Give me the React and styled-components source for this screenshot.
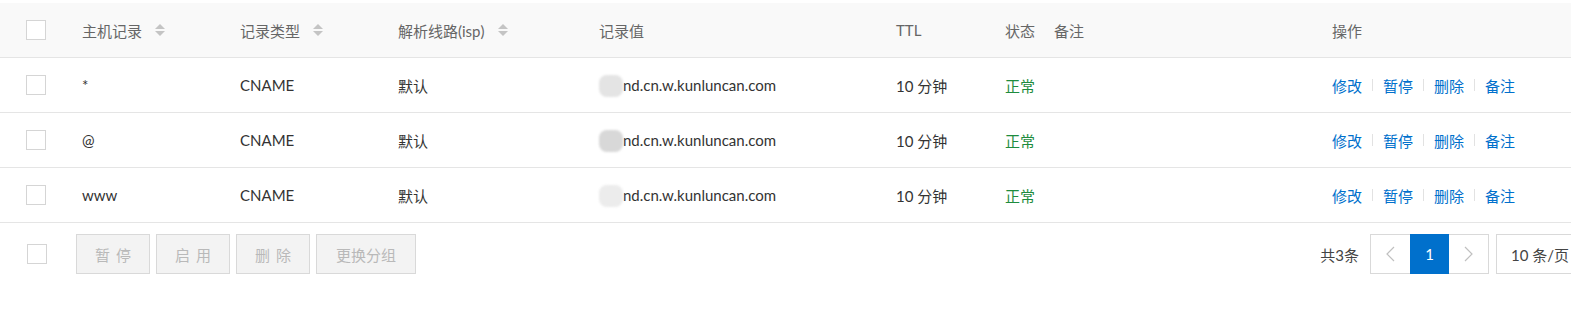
import React from 'react';
import styled, { createGlobalStyle } from 'styled-components';

const GlobalStyle = createGlobalStyle`
  html, body {
    margin: 0;
    padding: 0;
    background: #fff;
    font-family: Lato, "Noto Sans CJK SC", sans-serif;
    font-size: 15px;
    color: #333;
  }
`;

const cols = '82px 158px 158px 201px 297px 109px 49px 278px 1fr';

const Page = styled.div`
  padding-top: 3px;
  width: 1571px;
  overflow: hidden;
`;

const Row = styled.div`
  display: grid;
  grid-template-columns: ${cols};
  align-items: center;
  height: 54px;
  background: ${(p) => (p.head ? '#f9f9f9' : '#fff')};
  border-bottom: 1px solid #e5e5e5;
  color: ${(p) => (p.head ? '#666' : '#333')};
`;

const Cell = styled.div`
  display: flex;
  align-items: center;
  gap: 13px;
  white-space: nowrap;
  color: ${(p) => p.color || 'inherit'};
`;

const CheckCell = styled.div`
  padding-left: ${(p) => p.pad || 26}px;
  display: flex;
  align-items: center;
`;

const Check = styled.span`
  display: block;
  width: 18px;
  height: 18px;
  border: 1px solid #d5d5d5;
  background: #fff;
`;

const Sorter = styled.span`
  display: inline-flex;
  flex-direction: column;
  gap: 2px;
  &::before,
  &::after {
    content: '';
    display: block;
    width: 0;
    height: 0;
    border-left: 5px solid transparent;
    border-right: 5px solid transparent;
  }
  &::before {
    border-bottom: 5px solid #c4c4c4;
  }
  &::after {
    border-top: 5px solid #c4c4c4;
  }
`;

const Masked = styled.span`
  position: relative;
  padding-left: 24px;
`;

const Blob = styled.span`
  position: absolute;
  left: 0;
  top: -1px;
  width: 24px;
  height: 22px;
  border-radius: 8px;
  background: ${(p) => p.tone};
  filter: blur(1.2px);
`;

const Actions = styled.div`
  display: flex;
  align-items: center;
`;

const Link = styled.a`
  color: #0070cc;
  text-decoration: none;
  cursor: pointer;
`;

const Sep = styled.span`
  display: inline-block;
  width: 1px;
  height: 12px;
  background: #e2e2e2;
  margin: 0 10px;
`;

const Footer = styled.div`
  display: flex;
  align-items: center;
  padding-top: 11px;
`;

const BatchButtons = styled.div`
  display: flex;
  gap: 6px;
  margin-left: 29px;
`;

const BatchButton = styled.button`
  height: 40px;
  padding: 0;
  width: ${(p) => p.w}px;
  border: 1px solid #d9d9d9;
  background: #f3f3f3;
  color: #b9b9b9;
  font-family: inherit;
  font-size: 15px;
  letter-spacing: ${(p) => (p.spaced ? '6px' : '0')};
  text-indent: ${(p) => (p.spaced ? '6px' : '0')};
`;

const Pagination = styled.div`
  margin-left: auto;
  display: flex;
  align-items: center;
  margin-right: -12px;
`;

const Total = styled.span`
  color: #444;
  margin-right: 11px;
`;

const Pager = styled.div`
  display: flex;
  border: 1px solid #d9d9d9;
  height: 38px;
`;

const PageBtn = styled.span`
  width: 39px;
  display: flex;
  align-items: center;
  justify-content: center;
  background: ${(p) => (p.active ? '#0070cc' : '#fff')};
  color: ${(p) => (p.active ? '#fff' : '#bbb')};
  margin: ${(p) => (p.active ? '-1px 0' : '0')};
  height: ${(p) => (p.active ? '40px' : '38px')};
`;

const SizeSelect = styled.div`
  box-sizing: border-box;
  margin-left: 7px;
  height: 40px;
  width: 87px;
  border: 1px solid #d9d9d9;
  display: flex;
  align-items: center;
  padding-left: 14px;
  gap: 4px;
  color: #444;
  white-space: nowrap;
`;

const Caret = styled.span`
  width: 0;
  height: 0;
  border-left: 4px solid transparent;
  border-right: 4px solid transparent;
  border-top: 4px solid #999;
`;

const records = [
  { host: '*', tone: '#e4e4e4' },
  { host: '@', tone: '#d8d8d8' },
  { host: 'www', tone: '#ececec' },
];

const Chevron = ({ dir }) => (
  <svg width="9" height="16" viewBox="0 0 9 16">
    <path
      d={dir === 'left' ? 'M8 1 L1 8 L8 15' : 'M1 1 L8 8 L1 15'}
      fill="none"
      stroke="#c0c0c0"
      strokeWidth="1.2"
    />
  </svg>
);

export default function App() {
  return (
    <Page>
      <GlobalStyle />
      <Row head>
        <CheckCell>
          <Check />
        </CheckCell>
        <Cell>
          主机记录 <Sorter />
        </Cell>
        <Cell>
          记录类型 <Sorter />
        </Cell>
        <Cell>
          解析线路(isp) <Sorter />
        </Cell>
        <Cell>记录值</Cell>
        <Cell>TTL</Cell>
        <Cell>状态</Cell>
        <Cell>备注</Cell>
        <Cell>操作</Cell>
      </Row>
      {records.map((r) => (
        <Row key={r.host}>
          <CheckCell>
            <Check />
          </CheckCell>
          <Cell>{r.host}</Cell>
          <Cell>CNAME</Cell>
          <Cell>默认</Cell>
          <Cell>
            <Masked>
              <Blob tone={r.tone} />
              nd.cn.w.kunluncan.com
            </Masked>
          </Cell>
          <Cell>10 分钟</Cell>
          <Cell color="#1e8c3e">正常</Cell>
          <Cell />
          <Actions>
            <Link>修改</Link>
            <Sep />
            <Link>暂停</Link>
            <Sep />
            <Link>删除</Link>
            <Sep />
            <Link>备注</Link>
          </Actions>
        </Row>
      ))}
      <Footer>
        <CheckCell pad={27}>
          <Check />
        </CheckCell>
        <BatchButtons>
          <BatchButton w={74} spaced>暂停</BatchButton>
          <BatchButton w={74} spaced>启用</BatchButton>
          <BatchButton w={74} spaced>删除</BatchButton>
          <BatchButton w={100}>更换分组</BatchButton>
        </BatchButtons>
        <Pagination>
          <Total>共3条</Total>
          <Pager>
            <PageBtn>
              <Chevron dir="left" />
            </PageBtn>
            <PageBtn active>1</PageBtn>
            <PageBtn>
              <Chevron dir="right" />
            </PageBtn>
          </Pager>
          <SizeSelect>
            10 条/页 <Caret />
          </SizeSelect>
        </Pagination>
      </Footer>
    </Page>
  );
}
